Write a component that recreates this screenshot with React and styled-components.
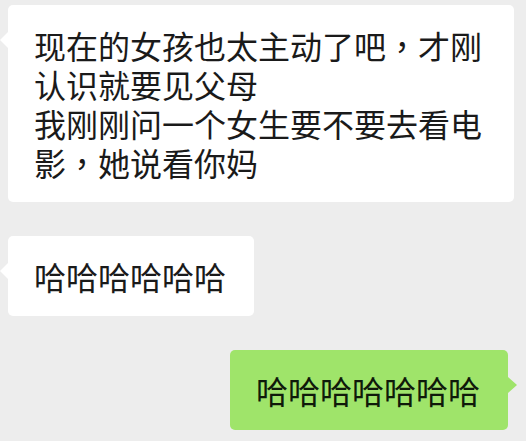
import styled, { createGlobalStyle, css } from 'styled-components';

const GlobalStyle = createGlobalStyle`
  html, body {
    margin: 0;
    padding: 0;
    background: #ededed;
  }
  * {
    box-sizing: border-box;
  }
`;

const messages = [
  {
    id: 1,
    mine: false,
    lines: ['现在的女孩也太主动了吧，才刚认识就要见父母', '我刚刚问一个女生要不要去看电影，她说看你妈'],
    wide: true,
  },
  { id: 2, mine: false, lines: ['哈哈哈哈哈哈'] },
  { id: 3, mine: true, lines: ['哈哈哈哈哈哈哈'] },
];

// full-width comma drawn centred in its cell, like the phone font does
const renderLine = (text) =>
  text.split('，').flatMap((part, i) => (i === 0 ? [part] : [<Punct key={i}>，</Punct>, part]));

const App = () => {
  return (
    <>
      <GlobalStyle />
      <Chat>
        {messages.map((m) => (
          <Row key={m.id} $mine={m.mine}>
            <Bubble $mine={m.mine} $wide={m.wide}>
              {m.lines.map((line, i) => (
                <Line key={i}>{renderLine(line)}</Line>
              ))}
            </Bubble>
          </Row>
        ))}
      </Chat>
    </>
  );
};

export default App;

const Chat = styled.div`
  display: flex;
  flex-direction: column;
  gap: 34px;
  width: 526px;
  height: 441px;
  padding: 5px 0 0 0;
  overflow: hidden;
  background: #ededed;
  font-family: 'Noto Sans CJK SC', 'Noto Sans', sans-serif;
`;

const Row = styled.div`
  display: flex;
  justify-content: ${(p) => (p.$mine ? 'flex-end' : 'flex-start')};
  padding: ${(p) => (p.$mine ? '0 18px 0 0' : '0 0 0 8px')};
`;

const Bubble = styled.div`
  position: relative;
  max-width: 506px;
  padding: 21px 28px 20px 26px;
  border-radius: 5px;
  background: ${(p) => (p.$mine ? '#9fe46a' : '#ffffff')};
  color: ${(p) => (p.$mine ? '#0f1a0a' : '#1a1a1a')};
  font-size: 32px;
  line-height: 39px;
  letter-spacing: 0;
  ${(p) =>
    p.$wide &&
    css`
      width: 506px;
      padding-right: 30px;
    `}

  &::before {
    content: '';
    position: absolute;
    top: 27px;
    width: 0;
    height: 0;
    border-top: 8px solid transparent;
    border-bottom: 8px solid transparent;
    ${(p) =>
      p.$mine
        ? css`
            right: -9px;
            border-left: 9px solid #9fe46a;
          `
        : css`
            left: -8px;
            border-right: 8px solid #ffffff;
          `}
  }
`;

const Line = styled.div`
  white-space: normal;
  word-break: break-all;
`;

const Punct = styled.span`
  display: inline-block;
  width: 1em;
  height: 39px;
  line-height: 39px;
  font-family: 'Noto Sans CJK TC', 'Noto Sans CJK SC', sans-serif;
`;
